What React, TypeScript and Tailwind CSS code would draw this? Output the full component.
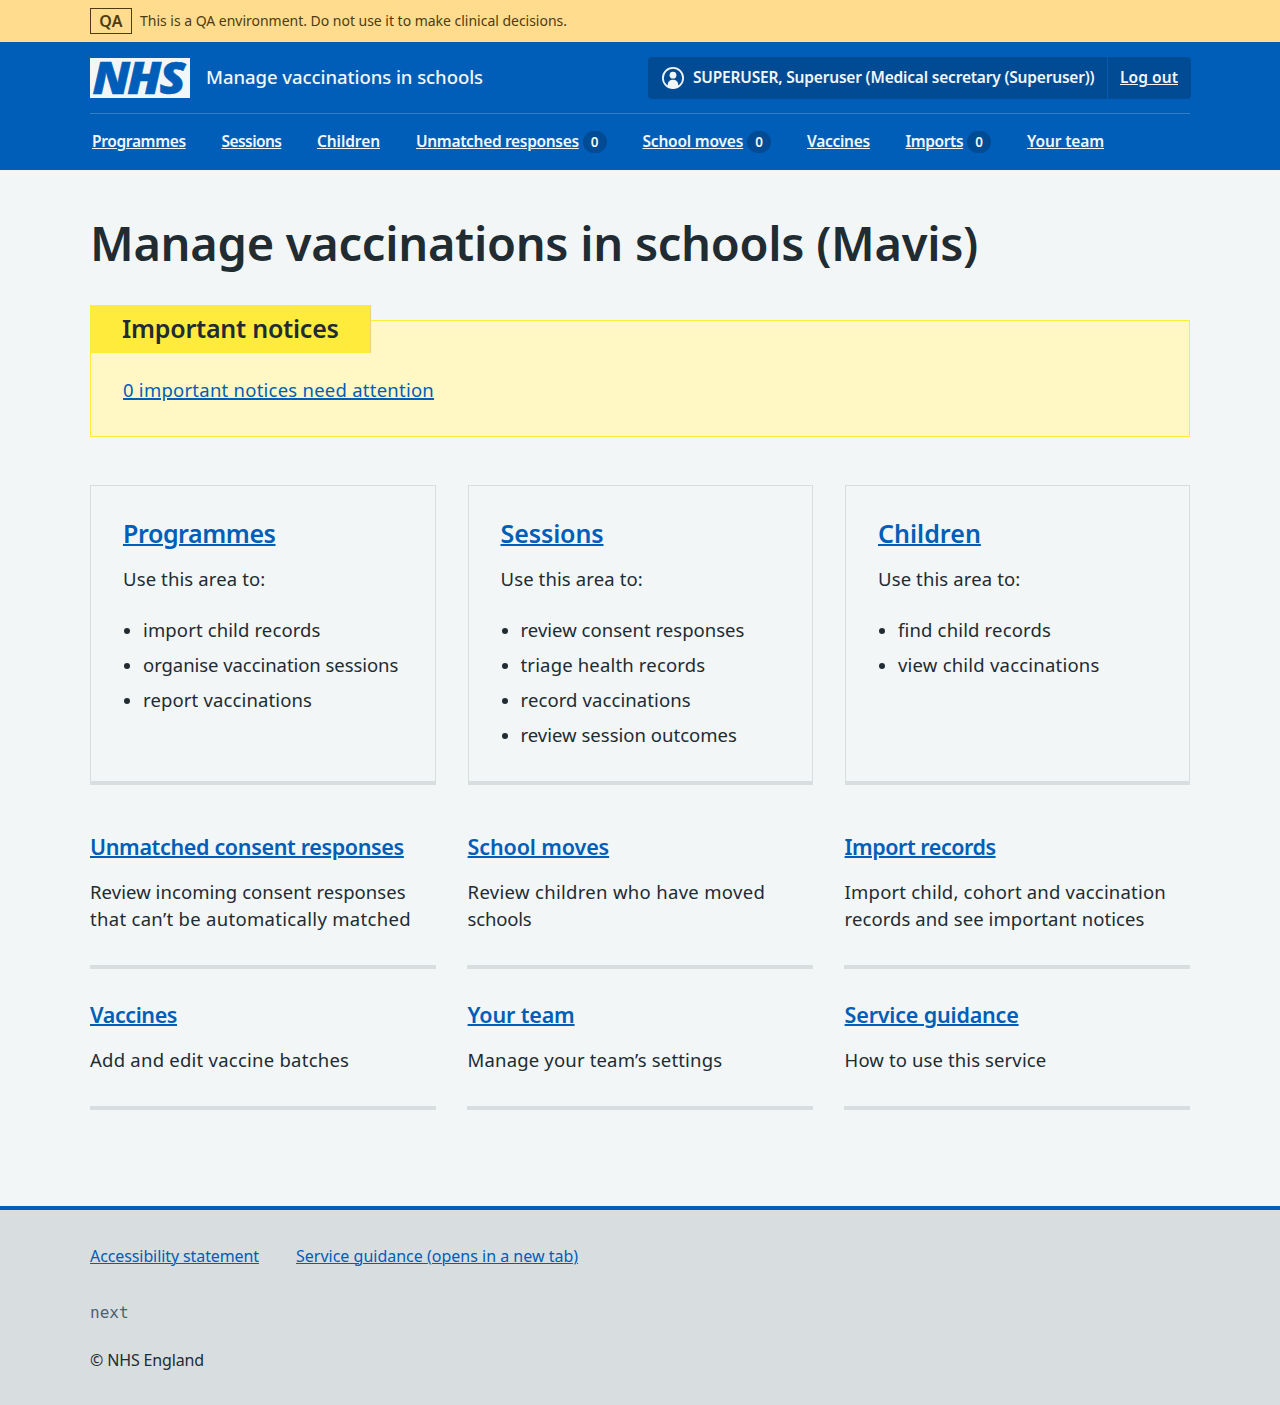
const link = "underline [text-decoration-thickness:1px] [text-underline-offset:1px]";
const thickLink = "text-[#005eb8] underline [text-decoration-thickness:2px] [text-underline-offset:1px]";

type NavItem = { label: string; track: string; width: string; count?: number };

const navItems: NavItem[] = [
  { label: "Programmes", track: "tracking-[-0.35px]", width: "w-[129.5px]" },
  { label: "Sessions", track: "tracking-[-0.56px]", width: "w-[95.5px]" },
  { label: "Children", track: "tracking-[-0.079px]", width: "w-[99px]" },
  { label: "Unmatched responses", track: "tracking-[-0.32px]", width: "w-[226.5px]", count: 0 },
  { label: "School moves", track: "tracking-[-0.2px]", width: "w-[164.5px]", count: 0 },
  { label: "Vaccines", track: "tracking-[-0.28px]", width: "w-[98.5px]" },
  { label: "Imports", track: "tracking-[-0.42px]", width: "w-[121.5px]", count: 0 },
  { label: "Your team", track: "tracking-[-0.121px]", width: "w-[80px]" },
];

type Line = { text: string; track: string };
type Block = { title: string; track: string; lines: Line[] };

const cards: Block[] = [
  {
    title: "Programmes",
    track: "tracking-[-0.42px]",
    lines: [
      { text: "import child records", track: "tracking-[0.125px]" },
      { text: "organise vaccination sessions", track: "tracking-[-0.06px]" },
      { text: "report vaccinations", track: "tracking-[0.14px]" },
    ],
  },
  {
    title: "Sessions",
    track: "tracking-[-0.1px]",
    lines: [
      { text: "review consent responses", track: "tracking-[0.025px]" },
      { text: "triage health records", track: "tracking-[0.165px]" },
      { text: "record vaccinations", track: "tracking-[0.105px]" },
      { text: "review session outcomes", track: "tracking-[0.01px]" },
    ],
  },
  {
    title: "Children",
    track: "tracking-[0.03px]",
    lines: [
      { text: "find child records", track: "tracking-[0.165px]" },
      { text: "view child vaccinations", track: "tracking-[0.21px]" },
    ],
  },
];

const links: Block[][] = [
  [
    {
      title: "Unmatched consent responses",
      track: "tracking-[-0.345px]",
      lines: [
        { text: "Review incoming consent responses", track: "tracking-[0.065px]" },
        { text: "that can’t be automatically matched", track: "tracking-[0.305px]" },
      ],
    },
    {
      title: "School moves",
      track: "tracking-[-0.121px]",
      lines: [
        { text: "Review children who have moved", track: "tracking-[0.315px]" },
        { text: "schools", track: "tracking-[-0.2px]" },
      ],
    },
    {
      title: "Import records",
      track: "tracking-[-0.463px]",
      lines: [
        { text: "Import child, cohort and vaccination", track: "tracking-[0.195px]" },
        { text: "records and see important notices", track: "tracking-[0.085px]" },
      ],
    },
  ],
  [
    {
      title: "Vaccines",
      track: "tracking-[-0.412px]",
      lines: [{ text: "Add and edit vaccine batches", track: "tracking-[0.24px]" }],
    },
    {
      title: "Your team",
      track: "tracking-[-0.147px]",
      lines: [{ text: "Manage your team’s settings", track: "tracking-[0.165px]" }],
    },
    {
      title: "Service guidance",
      track: "tracking-[-0.183px]",
      lines: [{ text: "How to use this service", track: "tracking-[0.115px]" }],
    },
  ],
];

function Logo() {
  return (
    <svg className="block shrink-0 overflow-visible" width="100" height="40" viewBox="0 0 100 40" role="img" aria-label="NHS">
      <rect width="100" height="40" fill="#f2f6f7" />
      <text
        transform="scale(1.07 1)"
        y="36"
        x="2.4 34.8 65"
        fill="#005eb8"
        stroke="#005eb8"
        strokeWidth="0.6"
        fontFamily="'Noto Sans', sans-serif"
        fontSize="44.5"
        fontWeight="900"
        fontStyle="italic"
      >
        NHS
      </text>
    </svg>
  );
}

function AccountIcon() {
  return (
    <svg className="block shrink-0" width="22" height="22" viewBox="0 0 22 22" fill="#f2f6f7">
      <circle cx="11" cy="11" r="10.1" fill="none" stroke="#f2f6f7" strokeWidth="1.8" />
      <circle cx="11" cy="8.2" r="3.4" />
      <path d="M11 12.8c3 0 5.2 1.9 5.2 4.6v2.4A10 10 0 0 1 11 21.4a10 10 0 0 1-5.2-1.6v-2.4c0-2.7 2.2-4.6 5.2-4.6z" />
    </svg>
  );
}

export default function App() {
  return (
    <div className="flex min-h-[1405px] flex-col bg-[#f2f6f7] font-['Noto_Sans',sans-serif] text-[18.5px] leading-[27px] text-[#212b32]">
      <div className="h-[42px] bg-[#ffdc8e] text-[#4d3c11]">
        <div className="mx-auto flex h-[42px] w-[1100px] items-center">
          <strong className="mr-2 flex h-[26px] w-[42px] items-center justify-center border border-[#4d3c11] pb-px text-base leading-6 font-semibold tracking-[0.3px]">
            QA
          </strong>
          <span className="text-sm tracking-[-0.02px]">
            This is a QA environment. Do not use it to make clinical decisions.
          </span>
        </div>
      </div>

      <header className="h-32 bg-[#005eb8] text-[#f2f6f7]">
        <div className="mx-auto w-[1100px]">
          <div className="flex h-[72px] items-start border-b border-[#337ec6]">
            <div className="mt-4 flex items-center gap-4">
              <Logo />
              <span className="pb-[3px] font-medium tracking-[-0.059px]">Manage vaccinations in schools</span>
            </div>
            <div className="mt-[15px] -mr-px ml-auto flex h-[42px] items-stretch rounded bg-[#004b93] text-[15.5px] leading-6 font-semibold">
              <div className="flex w-[460px] items-center gap-[9px] border-r border-[#005eb8] pl-3.5">
                <AccountIcon />
                <span className="pb-[2px] tracking-[-0.19px] whitespace-nowrap">
                  SUPERUSER, Superuser (Medical secretary (Superuser))
                </span>
              </div>
              <div className="flex w-[83px] items-center pb-[2px] pl-3">
                <a className={`tracking-[0.069px] ${link}`}>Log out</a>
              </div>
            </div>
          </div>
          <nav className="flex h-14 items-center pl-0.5 text-[15.5px] leading-6 font-semibold">
            {navItems.map((n) => (
              <div key={n.label} className={`flex shrink-0 items-center whitespace-nowrap ${n.width}`}>
                <a className={`pb-[2px] ${n.track} ${link}`}>{n.label}</a>
                {n.count !== undefined && (
                  <span className="ml-1 flex h-[22px] w-6 items-center justify-center rounded-full bg-[#004b93] text-[13.5px] leading-5">
                    {n.count}
                  </span>
                )}
              </div>
            ))}
          </nav>
        </div>
      </header>

      <main className="mx-auto w-[1100px] flex-1">
        <h1 className="pt-[43px] text-[47px] leading-[60px] font-semibold tracking-[-0.275px]">
          Manage vaccinations in schools (Mavis)
        </h1>

        <section className="mt-[47px] h-[117px] border border-[#ffeb3b] bg-[#fff8c4] pl-8">
          <h2 className="-mt-4 -ml-[33px] flex h-12 w-[281px] items-center border-r border-[#f0cf80] bg-[#ffeb3b] pb-[2px] pl-8 text-[25px] leading-8 font-semibold tracking-[-0.235px]">
            Important notices
          </h2>
          <p className="mt-[23px]">
            <a className={`tracking-[0.24px] ${thickLink}`}>0 important notices need attention</a>
          </p>
        </section>

        <div className="mt-12 grid grid-cols-[346px_345px_345px] gap-8">
          {cards.map((c, i) => (
            <section
              key={c.title}
              className={`h-[300px] border border-b-4 border-[#d8dde0] pt-[31px] ${i === 1 ? "px-[31.5px]" : "px-8"}`}
            >
              <h2 className={`text-[25px] leading-8 font-semibold ${c.track}`}>
                <a className={thickLink}>{c.title}</a>
              </h2>
              <p className="mt-4 tracking-[0.12px]">Use this area to:</p>
              <ul className="mt-6 flex flex-col gap-2">
                {c.lines.map((l) => (
                  <li key={l.text} className={`flex items-center whitespace-nowrap ${l.track}`}>
                    <span className="mt-0.5 mr-[13px] ml-px size-1.5 rounded-full bg-[#212b32]" />
                    {l.text}
                  </li>
                ))}
              </ul>
            </section>
          ))}
        </div>

        {links.map((row, r) => (
          <div
            key={r}
            className={`grid grid-cols-[346px_346px_346px] gap-x-[31px] ${r === 0 ? "mt-12 h-[136px]" : "mt-8 h-[109px]"}`}
          >
            {row.map((l, i) => (
              <section key={l.title} className={`border-b-4 border-[#d8dde0] ${i > 0 ? "pl-[0.6px]" : ""}`}>
                <h3 className={`pt-px text-[21.5px] leading-[26px] font-semibold ${l.track}`}>
                  <a className={thickLink}>{l.title}</a>
                </h3>
                <p className="mt-[18px] whitespace-nowrap">
                  {l.lines.map((t) => (
                    <span key={t.text} className={`block ${t.track}`}>
                      {t.text}
                    </span>
                  ))}
                </p>
              </section>
            ))}
          </div>
        ))}
      </main>

      <footer className="h-[199px] border-t-4 border-[#005eb8] bg-[#d8dde0] text-base leading-6">
        <div className="mx-auto w-[1100px] pt-[34px]">
          <div className="flex gap-[37px] text-[#005eb8]">
            <a className={`tracking-[-0.098px] ${link}`}>Accessibility statement</a>
            <a className={link}>Service guidance (opens in a new tab)</a>
          </div>
          <p className="mt-[33px] font-['DejaVu_Sans_Mono',monospace] text-[#4c6272]">next</p>
          <p className="mt-[23px] tracking-[-0.145px]">© NHS England</p>
        </div>
      </footer>
    </div>
  );
}
